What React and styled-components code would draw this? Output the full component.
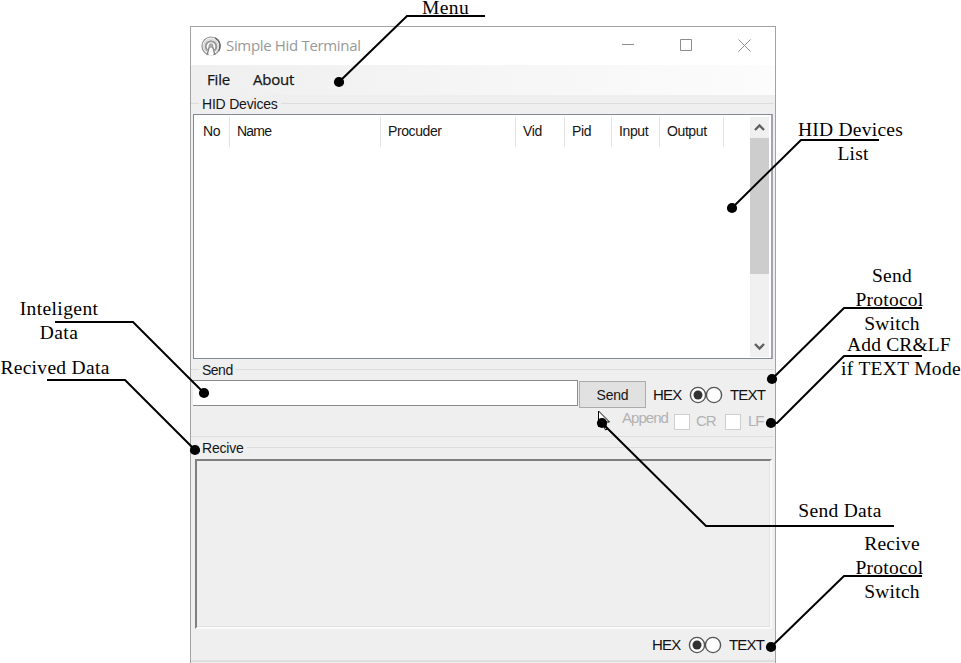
import React from "react";
import styled, { createGlobalStyle } from "styled-components";

const Global = createGlobalStyle`
  * { box-sizing: border-box; }
  body { margin: 0; background: #fff; overflow: hidden; }
`;

const Page = styled.main`
  position: relative;
  width: 961px;
  height: 663px;
  padding: 26px 0 0 190px;
  overflow: hidden;
  background: #fff;
`;

const Window = styled.section`
  display: flex;
  flex-direction: column;
  width: 586px;
  height: 637px;
  border: 1px solid #a2a2a2;
  border-bottom: 0;
  background: #efefef;
  color: #151515;
  font: 14px/16px "Liberation Sans", Arial, sans-serif;
`;

const TitleBar = styled.header`
  display: flex;
  flex: none;
  align-items: center;
  height: 38px;
  padding: 0 0 1px 10px;
  background: #fff;
  color: #999;
`;

const Title = styled.h1`
  flex: 1;
  margin: 0 0 2px 5px;
  font: 400 15px/20px "Open Sans", sans-serif;
  letter-spacing: ${(p) => p.$track}px;
`;

const CaptionButtons = styled.div`
  display: flex;
  width: 162px;
  gap: 45px;
  padding: 0 0 0 9px;
`;

const MenuBar = styled.nav`
  display: flex;
  flex: none;
  align-items: center;
  gap: 23px;
  height: 30px;
  padding: 0 0 2px 16px;
  background: linear-gradient(90deg, #efefef, #fcfcfc);
  font: 400 15px/20px "Open Sans", sans-serif;
  -webkit-text-stroke: 0.25px #151515;
`;

const MenuItem = styled.span`
  width: ${(p) => p.$w}px;
  white-space: nowrap;
  letter-spacing: ${(p) => p.$track}px;
`;

const Group = styled.section`
  flex: none;
  height: ${(p) => p.$h}px;
  padding-right: 1px;
`;

const Legend = styled.div`
  display: flex;
  align-items: center;
  height: ${(p) => p.$h}px;
  padding-bottom: ${(p) => p.$lift}px;
  gap: 3px;
  letter-spacing: ${(p) => p.$track}px;
  &::before, &::after {
    content: "";
    height: 1px;
    background: #dcdcdc;
  }
  &::before { width: 8px; }
  &::after { flex: 1; }
`;

const DeviceList = styled.div`
  display: flex;
  justify-content: space-between;
  width: 580px;
  height: 245px;
  margin-left: 2px;
  padding: 2px 2px 1px 0;
  border: 1px solid #848a94;
  border-right: 2px solid #a2a5ae;
  background: #fff;
`;

const Columns = styled.div`
  display: flex;
  height: 30px;
`;

const Column = styled.span`
  width: ${(p) => p.$w}px;
  padding: 6px 0 0 ${(p) => p.$pad || 7}px;
  border-right: 1px solid #e2e2e2;
  white-space: nowrap;
  letter-spacing: ${(p) => p.$track || 0}px;
`;

const ScrollBar = styled.div`
  display: flex;
  flex-direction: column;
  align-items: center;
  width: 19px;
  background: #f0f0f0;
`;

const Arrow = styled.svg`
  width: 19px;
  height: 21px;
  flex: none;
`;

const Thumb = styled.div`
  width: 19px;
  height: 136px;
  background: #cdcdcd;
`;

const Spacer = styled.div`
  flex: 1;
`;

const SendRow = styled.div`
  display: flex;
  height: 29px;
  padding-left: 2px;
`;

const TextInput = styled.input`
  width: 385px;
  height: 26px;
  border: 1px solid #8a8a8a;
  border-left: 0;
  outline: 0;
  background: #fff;
`;

const Button = styled.button`
  width: 67px;
  height: 27px;
  margin: 1px 0 0 1px;
  padding: 1px 0 0;
  border: 1px solid #acacac;
  background: #e1e1e1;
  color: #151515;
  font: inherit;
  letter-spacing: -0.2px;
`;

const Switch = styled.div`
  display: flex;
  align-items: center;
  height: ${(p) => p.$h}px;
  padding-left: ${(p) => p.$left}px;
`;

const SwitchLabel = styled.span`
  width: ${(p) => p.$w}px;
  color: #111;
  font-size: 15px;
  letter-spacing: ${(p) => p.$track}px;
  white-space: nowrap;
`;

const RadioPair = styled.svg`
  flex: none;
  width: 34px;
  height: 18px;
  margin-right: 7px;
`;

const AppendRow = styled.div`
  display: flex;
  height: 28px;
  padding: 4px 0 0 431px;
  border-bottom: 1px solid #dedede;
  color: #b2b2b2;
  font-size: 15px;
`;

const AppendLabel = styled.span`
  flex: none;
  width: 52px;
  margin-top: -3px;
  letter-spacing: -0.95px;
`;

const Check = styled.span`
  flex: none;
  width: 16px;
  height: 16px;
  margin-top: 1px;
  border: 1px solid #cfcfcf;
  background: #fff;
`;

const CheckLabel = styled.span`
  flex: none;
  width: ${(p) => p.$w}px;
  margin: 0 0 0 ${(p) => p.$left}px;
  letter-spacing: -1px;
`;

const Output = styled.div`
  width: 577px;
  height: 170px;
  margin-left: 4px;
  border: 2px solid;
  border-color: #7f7f7f #fafafa #fafafa #7f7f7f;
  box-shadow: inset -1px -1px #e2e2e2;
`;

const FooterLine = styled.div`
  flex: none;
  height: 3px;
  border-top: 2px solid #dedede;
`;

const Overlay = styled.svg`
  position: absolute;
  inset: 0;
  width: 961px;
  height: 663px;
`;

const Label = styled.div`
  position: absolute;
  left: ${(p) => p.$cx - 100}px;
  top: ${(p) => p.$y}px;
  width: 200px;
  color: #000;
  font: 19.5px/${(p) => p.$lh || 24}px "Liberation Serif", "Times New Roman", serif;
  letter-spacing: ${(p) => p.$track ?? 0.25}px;
  text-align: center;
  white-space: pre;
`;

const columns = [
  { name: "No", w: 36, pad: 9, track: -0.4 },
  { name: "Name", w: 151, track: -0.8 },
  { name: "Procuder", w: 135, track: -0.4 },
  { name: "Vid", w: 49, track: -0.4 },
  { name: "Pid", w: 47, track: -0.4 },
  { name: "Input", w: 48, track: -0.4 },
  { name: "Output", w: 64, track: -0.4 },
];

const callouts = [
  { text: "Menu", cx: 445.5, y: 0, lh: 16, track: 0.4, line: "485,16 407,16 339,82" },
  { text: "HID Devices\n List", cx: 850.5, y: 118, line: "879,140 801,140 732,208" },
  { text: "Send\nProtocol ", cx: 892, y: 264, line: "922,308 844,308 772,379" },
  { text: "Switch", cx: 892, y: 312, line: "" },
  { text: "Add CR&LF ", cx: 901.5, y: 333, track: 0.15, line: "922,356 844,356 777,423 771,423" },
  { text: "if TEXT Mode", cx: 901, y: 357, track: 0.3, line: "" },
  { text: "Inteligent\nData", cx: 59, y: 297, track: 0.4, line: "55,322 133,322 204,393" },
  { text: "Recived Data", cx: 55, y: 356, track: 0.3, line: "47,380 125,380 195,450" },
  { text: "Send Data", cx: 840, y: 499, track: 0.3, line: "894,526 706,526 602,423" },
  { text: "Recive\nProtocol \nSwitch", cx: 892, y: 532, line: "922,576 844,576 771,647" },
];

const LogoIcon = () => (
  <svg width="20" height="20" viewBox="0 0 20 20" fill="none">
    <circle cx="10" cy="10" r="9" stroke="#8f8f8f" strokeWidth="1.2" />
    <path d="M14 1.8A9.1 9.1 0 0 1 17.5 15" stroke="#666" strokeWidth="1.5" />
    <path d="M5 15.6A7.3 7.3 0 1 1 15 15.6" stroke="#ddd" strokeWidth="1.6" />
    <path d="M6.4 14.4A5.3 5.3 0 1 1 13.6 14.4" stroke="#999" strokeWidth="2" />
    <circle cx="10" cy="9.6" r="2.4" fill="#aaa" />
    <path d="M8.4 10.5 6 19M11.6 10.5 14 19" stroke="#888" strokeWidth="1.4" />
    <path d="M9.2 12h1.6l1.6 7.5H7.6z" fill="#fff" />
  </svg>
);

const Caption = ({ d }) => (
  <svg width="13" height="13" fill="none" stroke="#8d8d8d">
    <path d={d} />
  </svg>
);

const ProtocolSwitch = ({ left, h }) => (
  <Switch $left={left} $h={h}>
    <SwitchLabel $w={36} $track={-0.8}>HEX</SwitchLabel>
    <RadioPair fill="#fff" stroke="#555" strokeWidth="1.4">
      <circle cx="9" cy="9" r="7.6" />
      <circle cx="25" cy="9" r="7.6" />
      <circle cx="9" cy="9" r="4.5" fill="#333" stroke="none" />
    </RadioPair>
    <SwitchLabel $w={38} $track={-0.8}>TEXT</SwitchLabel>
  </Switch>
);

export default function App() {
  return (
    <Page>
      <Global />
      <Window>
        <TitleBar>
          <LogoIcon />
          <Title $track={-0.33}>Simple Hid Terminal</Title>
          <CaptionButtons>
            <Caption d="M0 5.5h12" />
            <Caption d="M.5 .5h11v11H.5z" />
            <Caption d="M.5 .5l12 12M12.5 .5L.5 12.5" />
          </CaptionButtons>
        </TitleBar>
        <MenuBar>
          <MenuItem $w={23} $track={-0.2}>File</MenuItem>
          <MenuItem $w={50} $track={-0.2}>About</MenuItem>
        </MenuBar>

        <Group $h={264}>
          <Legend $h={19} $lift={2} $track={-0.2}>HID Devices</Legend>
          <DeviceList>
            <Columns>
              {columns.map((c) => (
                <Column key={c.name} $w={c.w} $pad={c.pad} $track={c.track}>{c.name}</Column>
              ))}
            </Columns>
            <ScrollBar>
              <Arrow fill="none" stroke="#606060" strokeWidth="2.4">
                <path d="M5 13l4.5-4.5L14 13" />
              </Arrow>
              <Thumb />
              <Spacer />
              <Arrow fill="none" stroke="#606060" strokeWidth="2.4">
                <path d="M5 8l4.5 4.5L14 8" />
              </Arrow>
            </ScrollBar>
          </DeviceList>
        </Group>

        <Group $h={78}>
          <Legend $h={21} $lift={0} $track={-0.5}>Send</Legend>
          <SendRow>
            <TextInput aria-label="Data to send" />
            <Button>Send</Button>
            <ProtocolSwitch left={7} h={29} />
          </SendRow>
          <AppendRow>
            <AppendLabel>Append</AppendLabel>
            <Check />
            <CheckLabel $left={6} $w={29}>CR</CheckLabel>
            <Check />
            <CheckLabel $left={7} $w={20}>LF</CheckLabel>
          </AppendRow>
        </Group>

        <Group $h={223}>
          <Legend $h={22} $lift={1} $track={-0.2}>Recive</Legend>
          <Output />
          <ProtocolSwitch left={461} h={31} />
        </Group>
        <FooterLine />
      </Window>

      <Overlay fill="none" stroke="#000" strokeWidth="2">
        <path d="M598.5 411v16l4-4 3 7 2-1-3-7h5z" fill="#fff" strokeWidth="1" />
        {callouts.filter((c) => c.line).map((c) => {
          const [x, y] = c.line.split(" ").pop().split(",");
          return (
            <g key={c.line}>
              <polyline points={c.line} />
              <circle cx={x} cy={y} r="5.1" fill="#000" stroke="none" />
            </g>
          );
        })}
      </Overlay>
      {callouts.map((c) => (
        <Label key={c.text + c.y} $cx={c.cx} $y={c.y} $lh={c.lh} $track={c.track}>{c.text}</Label>
      ))}
    </Page>
  );
}
